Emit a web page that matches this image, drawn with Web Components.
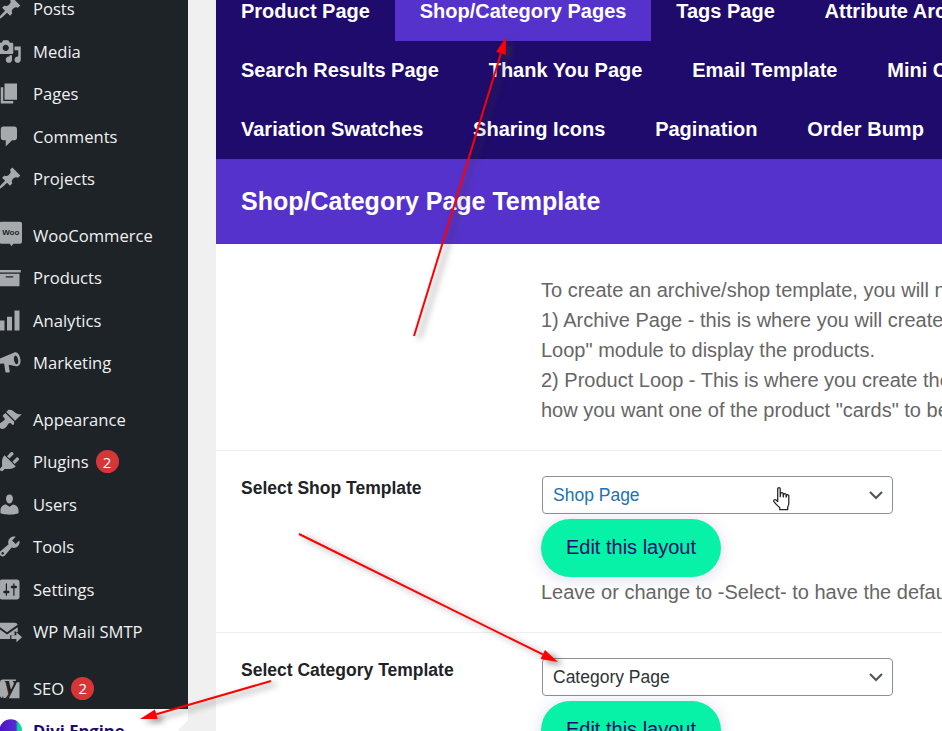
<!DOCTYPE html>
<html lang="en">
<head>
<meta charset="UTF-8">
<title>Shop/Category Page Template</title>
<style>
  html, body { margin: 0; height: 100%; overflow: hidden; background: #f0f0f1; }
  body { position: relative; width: 942px; height: 731px; }
</style>
</head>
<body>
  <admin-page>
    <wp-menu slot="menu">
      <wp-item icon="post" style="margin-top:-12.7px">Posts</wp-item>
      <wp-item icon="media">Media</wp-item>
      <wp-item icon="page">Pages</wp-item>
      <wp-item icon="comment">Comments</wp-item>
      <wp-item icon="post">Projects</wp-item>
      <wp-sep></wp-sep>
      <wp-item icon="woo">WooCommerce</wp-item>
      <wp-item icon="archive">Products</wp-item>
      <wp-item icon="chart">Analytics</wp-item>
      <wp-item icon="mega">Marketing</wp-item>
      <wp-sep></wp-sep>
      <wp-item icon="brush">Appearance</wp-item>
      <wp-item icon="plugin" badge="2">Plugins</wp-item>
      <wp-item icon="users">Users</wp-item>
      <wp-item icon="tools">Tools</wp-item>
      <wp-item icon="settings">Settings</wp-item>
      <wp-item icon="mail">WP Mail SMTP</wp-item>
      <wp-sep></wp-sep>
      <wp-item icon="yoast" badge="2">SEO</wp-item>
      <wp-item icon="divi" current>Divi Engine</wp-item>
    </wp-menu>

    <tab-nav slot="tabs">
      <div-row>
        <tab-link>Product Page</tab-link>
        <tab-link active>Shop/Category Pages</tab-link>
        <tab-link>Tags Page</tab-link>
        <tab-link>Attribute Archive Pages</tab-link>
      </div-row>
      <div-row>
        <tab-link>Search Results Page</tab-link>
        <tab-link>Thank You Page</tab-link>
        <tab-link>Email Template</tab-link>
        <tab-link>Mini Cart</tab-link>
      </div-row>
      <div-row>
        <tab-link>Variation Swatches</tab-link>
        <tab-link>Sharing Icons</tab-link>
        <tab-link>Pagination</tab-link>
        <tab-link>Order Bump</tab-link>
      </div-row>
    </tab-nav>

    <section-head slot="tabs">Shop/Category Page Template</section-head>

    <setting-row slot="rows" style="height:207px;padding-top:31px">
      <p-line>To create an archive/shop template, you will need to create two layouts</p-line>
      <p-line>1) Archive Page - this is where you will create the overall layout and add the</p-line>
      <p-line>Loop" module to display the products.</p-line>
      <p-line>2) Product Loop - This is where you create the layout of each product, so</p-line>
      <p-line>how you want one of the product "cards" to be displayed</p-line>
    </setting-row>

    <setting-row slot="rows" label="Select Shop Template" style="height:182px">
      <select-box tone="link">Shop Page</select-box>
      <edit-button>Edit this layout</edit-button>
      <p-line>Leave or change to -Select- to have the default shop page</p-line>
    </setting-row>

    <setting-row slot="rows" label="Select Category Template">
      <select-box>Category Page</select-box>
      <edit-button>Edit this layout</edit-button>
    </setting-row>
  </admin-page>

  <hand-cursor></hand-cursor>
  <red-arrows></red-arrows>

<script>
const icons = {
  post: '<path d="M10.44 3.02l1.82-1.82 6.36 6.35-1.83 1.82c-1.05-.68-2.48-.57-3.41.36l-.75.75c-.92.93-1.04 2.35-.35 3.41l-1.83 1.82-2.41-2.41-2.8 2.79c-.42.42-3.38 2.71-3.8 2.29s1.86-3.39 2.28-3.81l2.79-2.79L4.1 9.36l1.83-1.82c1.05.69 2.48.57 3.4-.36l.75-.75c.93-.92 1.05-2.35.36-3.41z"/>',
  media: '<path d="M13 11V4c0-.55-.45-1-1-1h-1.67L9 1H5L3.67 3H2c-.55 0-1 .45-1 1v7c0 .55.45 1 1 1h10c.55 0 1-.45 1-1zM7 4.5c1.38 0 2.5 1.12 2.5 2.5S8.38 9.5 7 9.5 4.5 8.38 4.5 7 5.62 4.5 7 4.5zM14 6h5v10.5c0 1.38-1.12 2.5-2.5 2.5S14 17.88 14 16.5s1.12-2.5 2.5-2.5c.17 0 .34.02.5.05V9h-3V6zm-4 8.05V13h2v3.5c0 1.38-1.12 2.5-2.5 2.5S7 17.88 7 16.5 8.12 14 9.5 14c.17 0 .34.02.5.05z"/>',
  page: '<path d="M6 15V2h10v13H6zm-1 1h8v2H3V5h2v11z"/>',
  comment: '<path d="M5 2h9c1.1 0 2 .9 2 2v7c0 1.1-.9 2-2 2h-2l-5 5v-5H5c-1.1 0-2-.9-2-2V4c0-1.1.9-2 2-2z"/>',
  woo: '<path d="M3.400 -1h15c.9 0 1.600.7 1.600 1.600v14.300c0 .9-.7 1.600-1.600 1.600h-5.200L11.400 18.500l-1-1.900h-7c-.9 0-1.600-.7-1.600-1.600V.6c0-.9.7-1.600 1.600-1.600z"/><text x="11" y="9.600" text-anchor="middle" font-family="Liberation Sans, sans-serif" font-weight="700" font-size="6.400" fill="#1d2327">Woo</text>',
  archive: '<path d="M19 4v2H1V4h18zM2 7h16v10H2V7zm11 3V9H7v1h6z"/>',
  chart: '<path d="M18 18V2h-4v16h4zm-6 0V7H8v11h4zm-6 0v-8H2v8h4z"/>',
  mega: '<path fill-rule="evenodd" d="M18.700 7.400c.5 2.800-.5 5.200-2.300 5.600-.4.100-.8 0-1.200-.1L9.300 11.700l.9 5.600c.1.400-.2.700-.6.700H7.400c-.4 0-.6-.2-.7-.6l-1-6.700-2.900.2C1.500 10.900 1 10.300 1 9.600V8.200c0-.6.400-1.100 1-1.200l11.400-4.900c.5-.3 1-.4 1.500-.3 1.800.1 3.300 2.500 3.800 5.600zM15.900 11.400c.9-.2 1.300-1.800 1-3.700-.4-1.900-1.400-3.400-2.300-3.200-.9.200-1.300 1.800-1 3.700.4 1.900 1.400 3.400 2.300 3.200z"/>',
  brush: '<path d="M14.480 11.060L7.410 3.990l1.500-1.500c.5-.56 2.300-.47 3.510.32 1.210.8 1.430 1.280 2.910 2.100 1.180.64 2.450 1.260 4.450.85zm-.71.71L6.700 4.700 4.930 6.470c-.39.39-.39 1.020 0 1.410l1.060 1.060c.39.39.39 1.030 0 1.420-.6.6-1.430 1.110-2.210 1.690-.35.26-.7.53-1.010.84C1.430 13.230.78 15.160 2.300 16.680c1.520 1.520 3.460.87 4.790-.46.31-.31.58-.66.84-1.010.57-.78 1.080-1.610 1.690-2.210.39-.39 1.020-.39 1.410 0l1.060 1.060c.39.39 1.020.39 1.410 0z"/>',
  plugin: '<path d="M13.110 4.360L9.870 7.600 8 5.730l3.240-3.240c.35-.34 1.050-.2 1.560.32.52.51.66 1.210.31 1.550zm-8 1.770l.91-1.120 9.010 9.010-1.190.84c-.71.71-2.630 1.160-3.820 1.160H6.140L4.900 17.260c-.59.59-1.540.59-2.120 0-.59-.58-.59-1.530 0-2.120l1.240-1.240v-3.880c0-1.130.4-3.190 1.090-3.890zm7.260 3.970l3.240-3.240c.34-.35 1.040-.21 1.550.31.52.51.66 1.210.31 1.550l-3.240 3.250z"/>',
  users: '<path d="M10 9.250c-2.270 0-2.730-3.440-2.730-3.440C7 4.020 7.820 2 9.970 2c2.160 0 2.980 2.020 2.710 3.810 0 0-.41 3.440-2.680 3.440zm0 2.570L12.720 10c2.390 0 4.520 2.330 4.520 4.530v2.490s-3.650 1.130-7.240 1.130c-3.650 0-7.240-1.130-7.240-1.130v-2.490c0-2.250 1.940-4.480 4.470-4.480z"/>',
  tools: '<path d="M16.680 9.770c-1.340 1.340-3.300 1.670-4.950.99l-5.410 6.520c-.99.99-2.590.99-3.580 0s-.99-2.59 0-3.570l6.520-5.420c-.68-1.650-.35-3.61.99-4.950 1.280-1.280 3.120-1.620 4.720-1.060l-2.890 2.890 2.820 2.820 2.860-2.870c.53 1.580.18 3.390-1.080 4.650zM3.810 16.210c.4.39 1.040.39 1.430 0 .4-.4.4-1.040 0-1.430-.39-.4-1.030-.4-1.430 0-.39.39-.39 1.030 0 1.430z"/>',
  settings: '<path d="M18 16V4c0-1.100-.9-2-2-2H4c-1.100 0-2 .9-2 2v12c0 1.100.9 2 2 2h12c1.100 0 2-.9 2-2zM8 11h1c.55 0 1 .45 1 1s-.45 1-1 1H8v1.500c0 .28-.22.5-.5.5s-.5-.22-.5-.5V13H6c-.55 0-1-.45-1-1s.45-1 1-1h1V5.500c0-.28.22-.5.5-.5s.5.22.5.5V11zm5-2h-1c-.55 0-1-.45-1-1s.45-1 1-1h1V5.500c0-.28.22-.5.5-.5s.5.22.5.5V7h1c.55 0 1 .45 1 1s-.45 1-1 1h-1v5.500c0 .28-.22.5-.5.5s-.5-.22-.5-.5V9z"/>',
  mail: '<path d="M0 5l8 5.500L16.500 4.500C16 3.600 15.300 3 14.400 3H2C1 3 .2 3.800 0 5zM0 6.800V14c0 1.100.9 2 2 2h8.500v-3H14V9.800l2.600.7V6.500L8 12.300 0 6.800z"/><path d="M15.500 10.500l4.500 4-4.500 4V16H11.500v-3h4z"/>',
  yoast: '<path d="M4.600 2.800h10.800L8.500 17.800H4.600c-1.200 0-2.200-1-2.200-2.200V5c0-1.200 1-2.200 2.200-2.200zM15.800 5H18v12.800h-8.500z"/><text x="10.600" y="14.400" text-anchor="middle" font-family="Liberation Serif, serif" font-style="italic" font-weight="700" font-size="21" fill="#1d2327">y</text>',
  divi: '<defs><linearGradient id="dg" x1="0" x2="1" y1="0" y2="0"><stop offset="0" stop-color="#4b12c9"/><stop offset=".72" stop-color="#5a2bd0"/><stop offset=".82" stop-color="#0bd7a4"/><stop offset="1" stop-color="#0bd7a4"/></linearGradient></defs><circle cx="11" cy="10" r="9" fill="url(#dg)"/>'
};

class AdminPage extends HTMLElement {
  connectedCallback() {
    this.attachShadow({ mode: 'open' }).innerHTML = `
      <style>
        :host { display: flex; width: 942px; height: 731px; overflow: hidden; }
        .side { flex: 0 0 188px; }
        .main { flex: 0 0 726px; margin-left: 28px; background: #fff; overflow: hidden;
                font-family: "Liberation Sans", Arial, sans-serif; }
        .scroll { margin-top: -18px; }
      </style>
      <div class="side"><slot name="menu"></slot></div>
      <div class="main"><div class="scroll">
        <slot name="tabs"></slot>
        <slot name="rows"></slot>
      </div></div>`;
  }
}

class WpMenu extends HTMLElement {
  connectedCallback() {
    this.attachShadow({ mode: 'open' }).innerHTML = `
      <style>
        :host { display: block; height: 731px; background: #1d2327; overflow: hidden;
                font: 400 16.6px "Open Sans", sans-serif; color: #f0f0f1; }
      </style><slot></slot>`;
  }
}

class WpItem extends HTMLElement {
  connectedCallback() {
    const name = this.getAttribute('icon');
    const badge = this.getAttribute('badge');
    this.attachShadow({ mode: 'open' }).innerHTML = `
      <style>
        :host { display: flex; align-items: center; position: relative; height: 42.5px; box-sizing: border-box;
                white-space: nowrap; }
        :host([current]) { background: #fff; color: #1e0b6b; font-weight: 700; }
        :host([current])::after { content: ""; position: absolute; right: 0; top: 11px; width: 10px; height: 20px;
                background: #f0f0f1; clip-path: polygon(100% 0, 0 50%, 100% 100%); }
        svg { flex: 0 0 25px; width: 25px; height: 25px; margin-left: -3px; margin-right: 11px; fill: #a7aaad; overflow: visible; }
        .badge { display: inline-flex; align-items: center; justify-content: center; width: 23px; height: 23px;
                 border-radius: 50%; background: #d63638; color: #fff; font-size: 15px; margin-left: 7px; }
      </style>
      <svg viewBox="0 0 20 20">${icons[name]}</svg><slot></slot>${badge ? `<span class="badge">${badge}</span>` : ''}`;
  }
}

class WpSep extends HTMLElement {
  connectedCallback() {
    this.attachShadow({ mode: 'open' }).innerHTML = `<style>:host { display: block; height: 14px; }</style>`;
  }
}

class TabNav extends HTMLElement {
  connectedCallback() {
    this.attachShadow({ mode: 'open' }).innerHTML = `
      <style>:host { display: block; background: #1e0b6b; color: #fff; font: 700 20px "Liberation Sans", Arial, sans-serif; }</style>
      <slot></slot>`;
  }
}

class DivRow extends HTMLElement {
  connectedCallback() {
    this.attachShadow({ mode: 'open' }).innerHTML = `
      <style>:host { display: flex; height: 59px; white-space: nowrap; }</style><slot></slot>`;
  }
}

class TabLink extends HTMLElement {
  connectedCallback() {
    this.attachShadow({ mode: 'open' }).innerHTML = `
      <style>
        :host { display: block; padding: 17px 24.8px 0 25px; height: 59px; box-sizing: border-box; line-height: 24px; }
        :host([active]) { background: #5632cc; }
      </style><slot></slot>`;
  }
}

class SectionHead extends HTMLElement {
  connectedCallback() {
    this.attachShadow({ mode: 'open' }).innerHTML = `
      <style>
        :host { display: flex; align-items: center; height: 85px; padding-left: 25px; background: #5632cc; color: #fff;
                font: 700 25px "Liberation Sans", Arial, sans-serif; }
      </style><slot></slot>`;
  }
}

class SettingRow extends HTMLElement {
  connectedCallback() {
    const label = this.getAttribute('label') || '';
    this.attachShadow({ mode: 'open' }).innerHTML = `
      <style>
        :host { display: grid; grid-template-columns: 300px 1fr; box-sizing: border-box; padding: 25px 0 0 25px;
                border-bottom: 1px solid #eee; overflow: hidden; }
        .label { font-weight: 700; font-size: 17.5px; line-height: 24px; color: #1d2327; }
      </style>
      <div class="label">${label}</div>
      <div class="field"><slot></slot></div>`;
  }
}

class PLine extends HTMLElement {
  connectedCallback() {
    this.attachShadow({ mode: 'open' }).innerHTML = `
      <style>:host { display: block; font-size: 20px; line-height: 30px; color: #666; white-space: nowrap; }</style><slot></slot>`;
  }
}

class SelectBox extends HTMLElement {
  connectedCallback() {
    const link = this.getAttribute('tone') === 'link';
    this.attachShadow({ mode: 'open' }).innerHTML = `
      <style>
        :host { display: flex; align-items: center; justify-content: space-between; box-sizing: border-box;
                width: 351px; height: 38px; margin-left: 1px; padding: 0 8px 0 10px;
                border: 1px solid #8c8f94; border-radius: 4px; background: #fff; font-size: 17.5px;
                color: ${link ? '#2271b1' : '#2c3338'}; }
        svg { width: 16px; height: 16px; }
      </style>
      <slot></slot>
      <svg viewBox="0 0 16 16"><path d="M2 5l6 6 6-6" fill="none" stroke="#50575e" stroke-width="2.200"/></svg>`;
  }
}

class EditButton extends HTMLElement {
  connectedCallback() {
    this.attachShadow({ mode: 'open' }).innerHTML = `
      <style>
        :host { display: flex; align-items: center; justify-content: center; box-sizing: border-box; width: 180px; height: 58px;
                margin-top: 5px; padding-bottom: 2px; border-radius: 29px; background: #07f2a7; color: #1e0b6b; font-size: 20px;
                box-shadow: 0 2px 16px rgba(80,60,160,.2); }
      </style><slot></slot>`;
  }
}

class HandCursor extends HTMLElement {
  connectedCallback() {
    this.attachShadow({ mode: 'open' }).innerHTML = `
      <style>:host { position: absolute; left: 772px; top: 486px; width: 20px; height: 28px; }</style>
      <svg width="20" height="28" viewBox="0 0 17.500 26" preserveAspectRatio="none">
        <path d="M5 2.500c0-1.300 2.200-1.300 2.200 0V10l.3-3c.2-1.200 2.200-1.100 2.300.1l.1 3 .3-2.300c.2-1.100 2-1 2.100.1l.1 2.500.5-1.700c.3-1 1.800-.7 1.800.4v6.900c0 1.500-.4 2.500-1 3.700v2.300H6.800v-1.800C5.200 18.500 3 16.500 1.700 14.500c-.8-1.300.6-2.600 1.800-1.500L5 14.400z"
              fill="#fff" stroke="#222" stroke-width="1.100" stroke-linejoin="round"/>
      </svg>`;
  }
}

class RedArrows extends HTMLElement {
  connectedCallback() {
    const arrow = (x1, y1, x2, y2) => {
      const a = Math.atan2(y2 - y1, x2 - x1);
      const L = 17, W = 5;
      const bx = x2 - L * Math.cos(a), by = y2 - L * Math.sin(a);
      const nx = -Math.sin(a) * W, ny = Math.cos(a) * W;
      return `<line x1="${x1}" y1="${y1}" x2="${bx}" y2="${by}" stroke="#f00" stroke-width="2"/>
        <polygon fill="#f00" points="${x2},${y2} ${bx + nx},${by + ny} ${bx - nx},${by - ny}"/>`;
    };
    this.attachShadow({ mode: 'open' }).innerHTML = `
      <style>
        :host { position: absolute; left: 0; top: 0; width: 942px; height: 731px; pointer-events: none; }
        svg { filter: drop-shadow(5px 3px 3px rgba(60,60,60,.6)); }
      </style>
      <svg width="942" height="731">
        ${arrow(414, 336, 506, 37)}
        ${arrow(299, 534, 558, 662)}
        ${arrow(271, 681, 140, 719)}
      </svg>`;
  }
}

customElements.define('admin-page', AdminPage);
customElements.define('wp-menu', WpMenu);
customElements.define('wp-item', WpItem);
customElements.define('wp-sep', WpSep);
customElements.define('tab-nav', TabNav);
customElements.define('div-row', DivRow);
customElements.define('tab-link', TabLink);
customElements.define('section-head', SectionHead);
customElements.define('setting-row', SettingRow);
customElements.define('p-line', PLine);
customElements.define('select-box', SelectBox);
customElements.define('edit-button', EditButton);
customElements.define('hand-cursor', HandCursor);
customElements.define('red-arrows', RedArrows);
</script>
</body>
</html>
